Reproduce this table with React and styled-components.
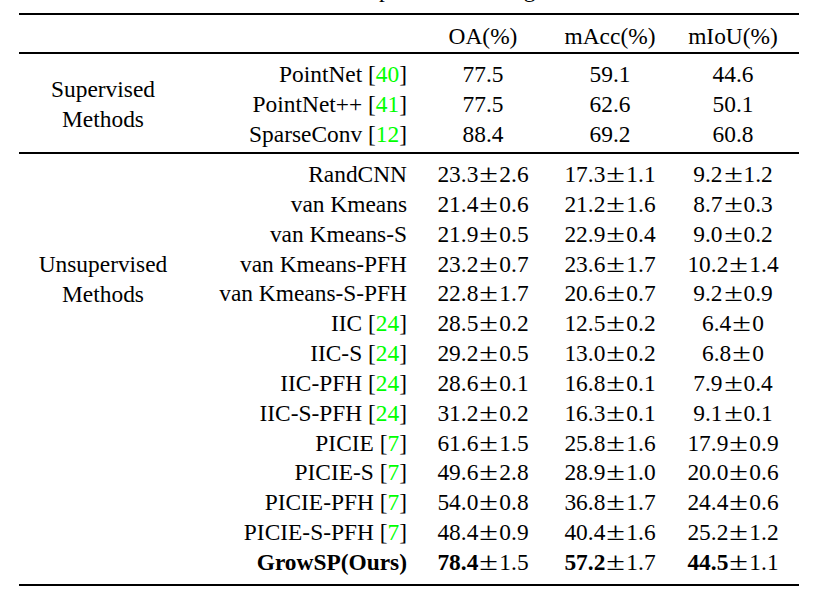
import React from "react";
import styled, { createGlobalStyle } from "styled-components";

const GlobalStyle = createGlobalStyle`
  html, body {
    margin: 0;
    padding: 0;
    background: #ffffff;
  }
  body {
    font-family: "Liberation Serif", "Times New Roman", serif;
    color: #000;
  }
`;

const Page = styled.div`
  width: 820px;
  height: 594px;
  padding-left: 19px;
  box-sizing: border-box;
  overflow: hidden;
  font-size: 23.4px;
`;

// the caption above the table is cut off, only its descenders peek in
const CaptionStrip = styled.div`
  height: 13px;
  width: 780px;
  overflow: hidden;
`;
const CaptionLine = styled.div`
  display: flex;
  line-height: 30px;
  margin-top: -26px;
  white-space: nowrap;
`;
const CaptionGlyph = styled.span`
  margin-left: ${(p) => p.$offset}px;
`;

const Rule = styled.div`
  width: 780px;
  height: 2px;
  background: #000;
`;

const Grid = styled.div`
  display: grid;
  width: 780px;
  grid-template-columns: 168px 226px 140px 114px 132px;
  grid-auto-rows: ${(p) => p.$rowHeight || 30}px;
  line-height: ${(p) => p.$rowHeight || 30}px;
  padding-top: ${(p) => p.$padTop}px;
  padding-bottom: ${(p) => p.$padBottom}px;
`;

const GroupLabel = styled.div`
  grid-column: 1;
  grid-row: ${(p) => p.$rows};
  display: flex;
  flex-direction: column;
  justify-content: center;
  align-items: center;
  text-align: center;
  line-height: 30px;
`;

const MethodCell = styled.div`
  grid-column: 2;
  text-align: right;
  padding-right: 6px;
  white-space: nowrap;
  font-weight: ${(p) => (p.$bold ? 700 : 400)};
`;

const ValueCell = styled.div`
  text-align: center;
  white-space: nowrap;
`;

// math-mode ± is much wider than the text glyph
const PlusMinus = styled.span`
  display: inline-block;
  width: 21px;
  text-align: center;
  transform: scale(1.45, 1.1);
  transform-origin: 50% 70%;
`;

const Cite = styled.span`
  color: #00ff00;
`;

const Strong = styled.b`
  font-weight: 700;
`;

const supervised = [
  { name: "PointNet", cite: "40", v: ["77.5", "59.1", "44.6"] },
  { name: "PointNet++", cite: "41", v: ["77.5", "62.6", "50.1"] },
  { name: "SparseConv", cite: "12", v: ["88.4", "69.2", "60.8"] },
];

const unsupervised = [
  { name: "RandCNN", v: ["23.3±2.6", "17.3±1.1", "9.2±1.2"] },
  { name: "van Kmeans", v: ["21.4±0.6", "21.2±1.6", "8.7±0.3"] },
  { name: "van Kmeans-S", v: ["21.9±0.5", "22.9±0.4", "9.0±0.2"] },
  { name: "van Kmeans-PFH", v: ["23.2±0.7", "23.6±1.7", "10.2±1.4"] },
  { name: "van Kmeans-S-PFH", v: ["22.8±1.7", "20.6±0.7", "9.2±0.9"] },
  { name: "IIC", cite: "24", v: ["28.5±0.2", "12.5±0.2", "6.4±0"] },
  { name: "IIC-S", cite: "24", v: ["29.2±0.5", "13.0±0.2", "6.8±0"] },
  { name: "IIC-PFH", cite: "24", v: ["28.6±0.1", "16.8±0.1", "7.9±0.4"] },
  { name: "IIC-S-PFH", cite: "24", v: ["31.2±0.2", "16.3±0.1", "9.1±0.1"] },
  { name: "PICIE", cite: "7", v: ["61.6±1.5", "25.8±1.6", "17.9±0.9"] },
  { name: "PICIE-S", cite: "7", v: ["49.6±2.8", "28.9±1.0", "20.0±0.6"] },
  { name: "PICIE-PFH", cite: "7", v: ["54.0±0.8", "36.8±1.7", "24.4±0.6"] },
  { name: "PICIE-S-PFH", cite: "7", v: ["48.4±0.9", "40.4±1.6", "25.2±1.2"] },
  { name: "GrowSP(Ours)", bold: true, v: ["78.4±1.5", "57.2±1.7", "44.5±1.1"] },
];

const Value = ({ text, bold }) => {
  if (!text.includes("±")) return <ValueCell>{text}</ValueCell>;
  const [main, rest] = text.split("±");
  return (
    <ValueCell>
      {bold ? <Strong>{main}</Strong> : main}
      <PlusMinus>±</PlusMinus>
      {rest}
    </ValueCell>
  );
};

const Rows = ({ rows }) =>
  rows.map((r) => (
    <React.Fragment key={r.name}>
      <MethodCell $bold={r.bold}>
        {r.name}
        {r.cite && (
          <>
            {" "}[<Cite>{r.cite}</Cite>]
          </>
        )}
      </MethodCell>
      {r.v.map((t, i) => (
        <Value key={i} text={t} bold={r.bold} />
      ))}
    </React.Fragment>
  ));

export default function App() {
  return (
    <>
      <GlobalStyle />
      <Page>
        <CaptionStrip>
          <CaptionLine>
            <CaptionGlyph $offset={360}>p</CaptionGlyph>
            <CaptionGlyph $offset={133}>g</CaptionGlyph>
          </CaptionLine>
        </CaptionStrip>
        <Rule />
        <Grid $padTop={6} $padBottom={1}>
          <MethodCell />
          <ValueCell>OA(%)</ValueCell>
          <ValueCell>mAcc(%)</ValueCell>
          <ValueCell>mIoU(%)</ValueCell>
        </Grid>
        <Rule />
        <Grid $padTop={5} $padBottom={3}>
          <GroupLabel $rows="1 / span 3">
            <span>Supervised</span>
            <span>Methods</span>
          </GroupLabel>
          <Rows rows={supervised} />
        </Grid>
        <Rule />
        <Grid $padTop={6} $padBottom={6} $rowHeight={29.85}>
          <GroupLabel $rows="4 / span 2">
            <span>Unsupervised</span>
            <span>Methods</span>
          </GroupLabel>
          <Rows rows={unsupervised} />
        </Grid>
        <Rule />
      </Page>
    </>
  );
}
